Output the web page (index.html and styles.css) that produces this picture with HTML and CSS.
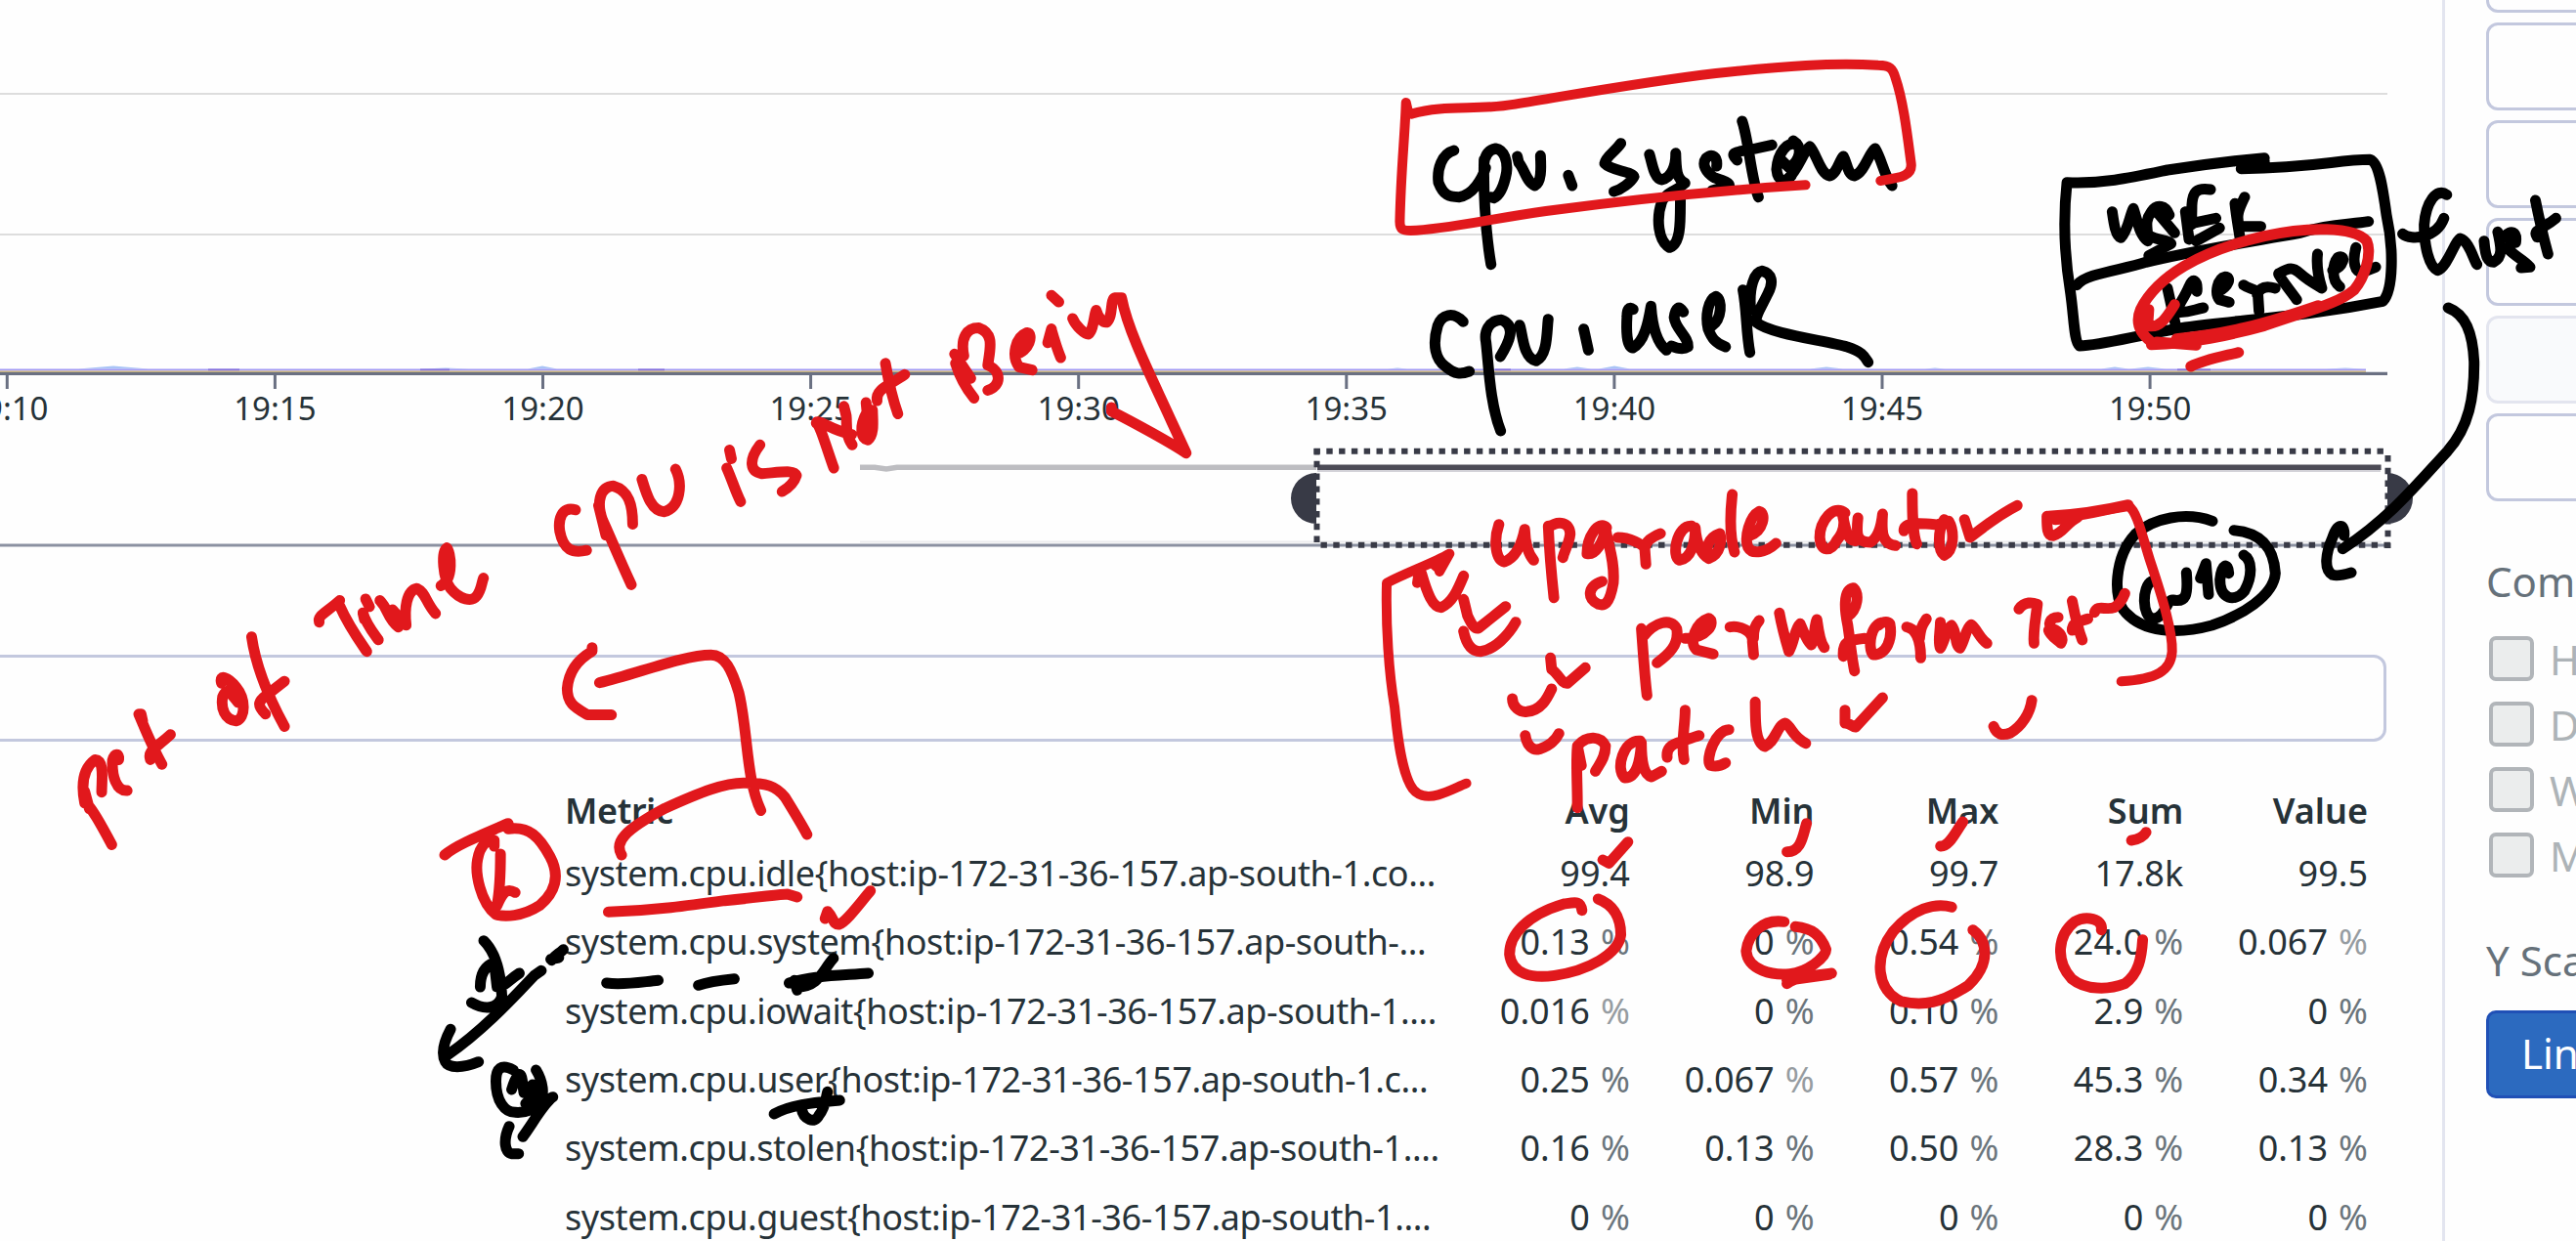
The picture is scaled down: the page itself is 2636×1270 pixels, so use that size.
FILE: index.html
```html
<!DOCTYPE html>
<html lang="en">
<head>
<meta charset="utf-8">
<title>Metrics explorer</title>
<link rel="stylesheet" href="styles.css">
</head>
<body>
<div class="page">
  <main class="main">
    <svg class="chart" width="2499" height="600" viewBox="0 0 2499 600">
      <g class="gridline"><path d="M0 96H2443M0 240H2443"/></g>
      <path class="series-light" d="M80 377.5l36 -3l36 3M432 377.5l24 -1l24 1M540 377.5l15 -3l15 3M1420 377.5l10 -1l10 1M1600 377.5l14 -2l14 2M1636 377.5l16 -3l16 3M1852 377.5l17 -2l17 2M1970 377.5l10 -1l10 1M2150 377.5l14 -2l14 2M2180 377.5l18 -2l18 2M2380 377.5l20 -1l18 1"/>
      <path class="series" d="M0 378.5H2421"/>
      <path class="series-deep" d="M213 378.5h32M430 378.5h30M653 378.5h27M1530 378.5h16M2228 378.5h34"/>
      <path class="series-yellow" d="M0 380.2H2421"/>
      <path class="axis" d="M0 382.3H2443"/>
      <path class="tick" d="M7.3 384v14M281.4 384v14M555.5 384v14M829.6 384v14M1103.7 384v14M1377.8 384v14M1651.9 384v14M1926 384v14M2200.1 384v14"/>
      <g class="tick-label">
        <text x="7.3" y="430">19:10</text><text x="281.4" y="430">19:15</text><text x="555.5" y="430">19:20</text><text x="829.6" y="430">19:25</text><text x="1103.7" y="430">19:30</text><text x="1377.8" y="430">19:35</text><text x="1651.9" y="430">19:40</text><text x="1926" y="430">19:45</text><text x="2200.1" y="430">19:50</text>
      </g>
      <path class="overview-axis" d="M0 558H2443"/>
      <path class="overview-faint" d="M880 554.5H2437"/>
      <path class="overview-out" d="M880 478.3H895L907 480L918 478.3H1347"/>
      <path class="overview-shadow" d="M1348 482H2436"/>
      <path class="overview-in" d="M1348 478.3H2436.6"/>
      <path class="handle" d="M1347 484a26 26 0 0 0 0 52zM2443 484a26 26 0 0 1 0 52z"/>
      <path class="brush" d="M1344.5 461.7H2443"/>
      <path class="brush" d="M1351.5 557.7H2446M1347.5 459V556M2443.5 466V561"/>
    </svg>
    <div class="search"></div>
    <div class="table">
      <div class="row head"><span class="metric">Metric</span><span>Avg</span><span>Min</span><span>Max</span><span>Sum</span><span>Value</span></div>
      <div class="row"><span class="metric">system.cpu.idle{host:ip-172-31-36-157.ap-south-1.co...</span><span>99.4</span><span>98.9</span><span>99.7</span><span>17.8k</span><span>99.5</span></div>
      <div class="row"><span class="metric">system.cpu.system{host:ip-172-31-36-157.ap-south-...</span><span>0.13<i>%</i></span><span>0<i>%</i></span><span>0.54<i>%</i></span><span>24.0<i>%</i></span><span>0.067<i class="dim">%</i></span></div>
      <div class="row"><span class="metric">system.cpu.iowait{host:ip-172-31-36-157.ap-south-1....</span><span>0.016<i class="dim">%</i></span><span>0<i>%</i></span><span>0.10<i>%</i></span><span>2.9<i>%</i></span><span>0<i>%</i></span></div>
      <div class="row"><span class="metric">system.cpu.user{host:ip-172-31-36-157.ap-south-1.c...</span><span>0.25<i>%</i></span><span>0.067<i class="dim">%</i></span><span>0.57<i>%</i></span><span>45.3<i>%</i></span><span>0.34<i>%</i></span></div>
      <div class="row"><span class="metric">system.cpu.stolen{host:ip-172-31-36-157.ap-south-1....</span><span>0.16<i>%</i></span><span>0.13<i>%</i></span><span>0.50<i>%</i></span><span>28.3<i>%</i></span><span>0.13<i>%</i></span></div>
      <div class="row"><span class="metric">system.cpu.guest{host:ip-172-31-36-157.ap-south-1....</span><span>0<i>%</i></span><span>0<i>%</i></span><span>0<i>%</i></span><span>0<i>%</i></span><span>0<i>%</i></span></div>
    </div>
  </main>
  <aside class="side">
    <div class="fields">
      <div class="field"></div><div class="field"></div><div class="field"></div><div class="field"></div><div class="field disabled"></div><div class="field"></div>
    </div>
    <div class="title">Com</div>
    <div class="checks">
      <div class="check"><b></b>H</div><div class="check"><b></b>D</div><div class="check"><b></b>W</div><div class="check"><b></b>M</div>
    </div>
    <div class="title scale">Y Sca</div>
    <div class="button">Lin</div>
  </aside>
</div>
<svg class="ink" width="2636" height="1270" viewBox="0 0 2636 1270">
  <g class="black">
    <g transform="translate(1400 40) scale(.3954 .33333)">
      <path d="M222 342C190 352 178 400 182 440C195 480 210 485 235 485C270 480 295 430 304 395M300 400C298 360 310 340 330 336C352 340 362 375 358 410C352 450 340 480 325 488L318 485M300 370C298 450 302 580 318 692"/>
      <path d="M386 360L390 380C405 400 410 440 432 450C448 440 448 400 446 358M518 418L528 450M654 320C640 345 615 360 612 382C630 405 680 405 688 422C680 440 655 462 636 468"/>
      <path d="M728 354C735 380 740 430 760 432C785 425 797 390 796 350C797 400 798 430 820 442C800 465 770 470 760 500C745 550 750 620 780 640C810 630 808 560 808 490"/>
      <path d="M902 390C905 360 890 350 875 365C862 385 875 410 895 425C920 435 935 440 935 450L890 465M968 252C985 310 990 420 1010 485M955 372C935 350 950 345 980 342L1045 325"/>
      <path d="M1110 325C1085 310 1060 350 1057 400C1060 440 1080 440 1095 420M1100 312C1125 330 1120 370 1090 395L1068 370"/>
      <path d="M1085 430C1115 400 1125 345 1143 330C1160 350 1170 415 1195 420C1215 410 1220 370 1230 360C1240 380 1240 415 1258 420C1285 410 1295 350 1312 336C1330 370 1335 420 1356 450"/>
      <path d="M246 868C220 835 190 845 180 880C165 940 175 985 200 1005C225 1030 240 1030 262 1020M342 975C365 930 385 880 345 862C310 865 300 900 305 930C312 1000 315 1120 343 1203M392 878C400 900 400 980 435 988C465 970 462 900 466 860M558 890L570 955"/>
      <path d="M686 830C675 820 670 830 670 850C668 890 668 945 685 948C715 930 725 870 732 820C735 870 745 930 772 955M816 838C805 815 795 825 792 855C795 890 830 915 828 945C815 955 800 950 785 942M890 880C915 860 918 800 900 790C880 800 872 850 880 890C890 920 900 935 925 945"/>
      <path d="M970 770C980 830 978 900 988 962M990 830C985 760 1000 715 1020 712C1045 720 1050 745 1035 780C1015 830 1000 850 1005 870C1040 905 1180 925 1240 945C1280 960 1285 975 1294 992"/>
    </g>
    <g transform="translate(2060 120) scale(.36735 .33333)">
      <path d="M700 125C600 135 500 150 430 162C330 185 250 205 150 200C140 300 142 420 160 540C170 620 170 690 185 702C250 700 340 670 480 645C640 620 800 615 1030 565C1060 530 1060 400 1040 300C1030 220 1020 140 995 130C900 130 850 155 635 158M700 135L645 150"/>
      <path d="M178 515C200 480 300 470 370 445C500 410 620 390 800 355C880 325 940 330 990 320"/>
      <path d="M276 290C280 320 285 365 300 370C320 350 325 300 335 280C345 310 350 360 375 380M435 300C425 270 400 265 385 290C365 320 375 340 375 370M400 290L450 355M375 360C400 380 430 375 440 388L378 425M480 290L490 375M550 222C510 215 500 230 498 270C498 310 495 340 500 325L565 310M575 340L510 380M618 265C622 310 628 340 632 372M645 245C630 280 620 300 630 335L690 335"/>
      <path d="M430 525L452 635M512 535C515 500 500 490 490 520C475 560 450 590 460 598C490 600 505 590 530 585M572 535C600 520 610 490 590 490C570 495 560 540 575 560L602 568M642 515C660 530 680 525 682 545L685 595M680 545C690 515 715 520 730 525M790 560C770 530 735 480 740 480C770 460 780 460 800 480C820 500 845 515 860 525C850 490 845 450 848 420M890 470C920 460 930 420 905 430C890 450 885 500 910 520M955 400C945 440 950 480 975 475L1010 460"/>
      <path d="M1085 358C1110 380 1180 370 1200 310M1208 238C1180 215 1150 260 1145 330C1145 400 1160 460 1182 470C1210 460 1230 380 1245 372C1270 380 1280 430 1292 452M1312 380C1315 420 1320 445 1338 445C1365 430 1360 400 1350 352M1400 385C1405 350 1385 345 1370 365C1375 390 1380 400 1375 400C1400 430 1420 435 1440 460L1415 462M1455 255C1465 310 1480 380 1490 420M1460 368C1445 345 1475 345 1512 310"/>
      <path d="M1212 585C1260 605 1280 660 1284 750C1285 860 1270 950 1210 1025C1130 1120 1050 1230 918 1325M922 1285C925 1250 905 1240 890 1290C870 1340 865 1390 890 1405C905 1410 930 1402 942 1398"/>
    </g>
    <g transform="translate(2120 480) scale(.33333)">
      <path d="M432 160C350 130 250 150 195 200C130 270 125 400 165 440C220 500 320 510 430 480C520 450 620 390 625 320C620 240 580 195 498 188"/>
      <path d="M245 345C215 360 215 455 250 460C290 455 290 400 310 402C350 410 358 390 352 318M395 335L412 290L420 385M482 320C480 285 460 290 455 340C455 400 500 410 530 375C555 330 555 280 528 264"/>
    </g>
    <g transform="translate(420 780) scale(.35714 .33333)">
      <path d="M210 548C250 590 260 670 262 720C250 760 210 760 175 738M200 690C200 650 215 625 240 615L248 690C270 690 280 670 312 648M375 640L355 655C280 740 200 830 105 900M115 820C90 870 90 900 100 920C110 940 150 940 195 920M405 608C415 590 425 590 438 575M402 605L425 600"/>
      <path d="M562 678C610 685 660 675 710 670M825 685C850 675 880 670 928 665M1085 678C1150 655 1230 655 1312 648M1108 700L1100 670M1090 678L1150 670M1110 690C1170 690 1180 640 1212 602"/>
      <path d="M295 945C260 925 245 940 245 980C245 1040 270 1075 300 1075C350 1080 380 1040 408 1028M360 945C380 980 385 1020 370 1050M290 1005C300 970 315 940 320 975L325 1015L350 990L370 1010L330 1048L370 1035M408 1028C380 1050 350 1110 322 1150M283 1118C265 1160 270 1200 290 1202H310"/>
      <path d="M1042 1080C1090 1050 1160 1045 1230 1038M1120 1060C1125 1100 1160 1110 1170 1085C1190 1060 1190 1030 1195 1012"/>
    </g>
  </g>
  <g class="red">
    <g transform="translate(1400 40) scale(.3954 .33333)">
      <path class="fine" d="M98 195L102 215M112 230C200 200 280 220 380 200C560 165 720 130 900 105C1080 82 1200 72 1320 80C1350 80 1358 90 1365 120C1385 190 1395 290 1405 380C1410 420 1380 425 1326 435M98 195C95 300 85 400 82 560C82 585 90 588 110 588C200 585 300 555 460 528C700 490 900 465 1132 448"/>
    </g>
    <g transform="translate(2060 120) scale(.36735 .33333)">
      <path d="M385 690C350 660 340 630 355 590C400 490 520 410 700 365C820 335 950 335 985 380C1000 420 980 490 950 530C900 575 830 590 700 640C600 670 500 695 385 698M378 590L375 640C410 650 430 610 450 575M400 690L510 700M455 680C600 665 700 635 850 578M495 765C530 745 580 735 628 722"/>
    </g>
    <g transform="translate(2120 480) scale(.33333)">
      <path class="fine" d="M0 145C60 140 120 120 175 114C200 130 215 200 240 280C280 400 310 500 308 560C305 620 260 645 152 652"/>
    </g>
    <g transform="translate(1380 440) scale(.57398 .33333)">
      <path d="M268 290C258 340 262 400 278 405C300 390 310 340 314 305C315 350 320 380 330 400M356 295C358 380 362 450 366 515M356 300C375 275 395 285 395 320C393 350 385 370 382 392M460 300C445 275 425 330 425 380C440 385 455 345 458 300C462 350 475 400 472 470C465 540 455 540 445 535C425 520 425 480 452 465M480 330C500 330 525 350 528 365L530 412M528 365C530 340 540 330 556 318"/>
      <path d="M612 295C585 290 575 390 590 400C610 395 618 350 618 300C620 350 630 385 642 395C665 380 665 335 662 318C640 330 635 370 642 390M684 198C680 260 680 330 688 375M715 325C740 310 745 255 732 250C715 265 705 330 712 360C720 385 745 375 762 348"/>
      <path d="M885 255C865 225 840 280 840 330C842 375 860 375 870 340C885 310 885 280 880 255C885 300 890 345 905 340M908 270C905 320 905 345 930 345C945 330 950 290 952 258C950 310 950 350 975 355M1005 195C1005 250 1005 320 1013 350M990 310C990 285 1010 285 1045 290M1062 275C1050 310 1050 370 1062 385C1080 370 1080 310 1070 280L1050 290M1098 275L1108 330C1130 300 1160 260 1192 232"/>
      <path d="M1245 265C1245 300 1245 325 1256 325C1275 315 1280 285 1300 268L1260 275M1248 265C1300 260 1340 250 1390 230"/>
      <path class="fine" d="M180 380C150 410 100 440 68 470C66 600 72 750 82 850C88 960 95 1040 110 1090C120 1125 140 1130 160 1120C180 1110 195 1095 210 1085M180 380L162 435M125 435L122 470M150 410L160 425"/>
      <path d="M130 440C140 500 150 545 165 545C185 530 195 490 205 448M205 520L212 570C220 600 225 612 232 608L280 542M205 618C210 660 220 680 235 680C260 675 285 630 298 590M360 700L362 735C375 750 380 780 390 778L422 730M292 825C292 850 305 868 318 865C345 860 355 820 362 795M315 938C318 970 328 985 340 980C358 970 370 950 375 932"/>
      <path d="M522 610C525 680 528 760 532 815M525 635C545 590 575 575 585 610C590 660 570 690 550 715M600 640C640 640 655 590 642 578C620 590 605 650 620 675L650 688M680 605C700 600 722 620 720 650L722 690M722 640C722 610 725 600 732 585M768 562C772 600 778 640 785 680C795 650 795 610 805 595C812 620 815 645 825 660C832 630 830 600 835 582C838 620 840 650 848 668"/>
      <path d="M888 575C910 550 910 500 900 485C880 490 885 560 890 600C895 660 898 710 902 740M882 695C880 650 890 645 920 640M955 590C930 590 925 670 935 690C960 690 970 640 965 595C960 585 950 590 945 600M995 605C1010 610 1020 640 1020 700M1018 640C1020 610 1022 600 1030 580M1055 590C1055 620 1050 650 1055 670C1065 640 1065 610 1075 600C1085 620 1080 660 1090 670C1100 640 1100 610 1110 598C1120 610 1125 640 1138 655"/>
      <path d="M1195 550C1205 525 1220 530 1228 535C1225 580 1220 620 1222 655M1265 575C1250 575 1245 600 1255 610C1270 620 1275 640 1270 655C1260 640 1250 630 1248 615M1290 525C1295 570 1300 610 1308 645M1290 615C1290 590 1300 590 1318 580M1330 560C1335 535 1350 555 1365 545C1375 535 1380 520 1384 502"/>
      <path d="M408 1160C408 1080 405 1020 408 970C425 935 450 940 458 970C458 1010 445 1030 440 1048M408 970L415 1030M520 955C490 950 475 1040 492 1068C515 1070 520 1010 522 960C522 1010 525 1060 540 1065L558 1048M600 860C600 910 592 960 598 1012M568 1005C565 960 590 960 625 938M678 920C655 920 635 1010 645 1030C655 1035 665 1030 672 1022M725 835C725 900 725 960 742 972C760 960 765 905 778 900C790 910 790 940 815 962M885 860L885 900C895 900 900 915 904 912L952 822M1150 910C1155 935 1165 940 1180 930C1200 910 1215 870 1218 830"/>
    </g>
    <g transform="translate(40 280) scale(.3954)">
      <path d="M188 1478C165 1435 130 1370 118 1370C108 1320 115 1280 145 1258C170 1260 162 1310 162 1342M130 1385L118 1340M206 1258C208 1240 195 1240 190 1260C188 1300 200 1340 228 1338M258 1140C275 1180 295 1230 318 1270M264 1140L268 1158M288 1258C280 1235 300 1230 340 1193"/>
      <path d="M472 1060C465 1035 490 1045 510 1070C535 1100 535 1150 510 1158C480 1155 470 1125 475 1095C485 1070 500 1090 515 1110L495 1075M550 940C560 1010 585 1080 635 1172M586 1140C560 1115 570 1105 590 1090L635 1055"/>
      <path d="M725 902C720 885 740 880 778 846M778 860C800 910 825 945 848 978M845 842L855 862M838 878L842 895M838 878C845 905 865 930 878 948M882 846C905 870 900 890 930 915L915 870L950 910C945 870 950 820 978 815C1000 825 1000 850 1026 880M1040 808C1075 790 1065 720 1055 710C1040 720 1045 790 1065 815C1090 845 1120 850 1132 835C1145 820 1145 800 1150 788M1055 715L1058 780"/>
    </g>
    <g transform="translate(520 280) scale(.47194 .38265)">
      <path d="M146 632C115 620 108 660 112 690C120 740 140 748 170 740M267 832C240 760 220 700 205 660C190 610 200 570 228 568C262 580 270 620 270 670M196 620L212 700M290 550C300 590 310 635 338 637C375 625 378 560 363 523M480 472L484 495M474 520C485 550 492 580 504 610M546 458C520 500 525 530 550 535C600 530 620 525 625 540C620 560 605 575 594 583"/>
      <path d="M706 520C690 465 675 400 668 400C670 385 700 420 745 430M728 355L733 380C735 400 730 430 746 458M776 345L778 370C760 410 765 440 780 445C795 430 790 390 790 365L782 410M818 240C825 290 835 340 845 375M800 340C795 310 825 300 860 270"/>
      <path d="M968 215L1003 280M970 240C980 280 995 310 1010 333M988 220C980 170 995 145 1020 145C1055 160 1045 200 1040 245C1070 260 1070 300 1040 312M1100 215C1130 210 1140 160 1125 158C1100 170 1090 220 1108 250L1136 258M1178 58L1194 76M1178 148L1170 185M1178 150C1185 180 1190 200 1198 225M1224 120C1230 140 1250 162 1258 162C1270 150 1270 110 1275 98C1280 120 1290 132 1298 130C1312 115 1305 70 1315 65L1330 65C1345 160 1400 290 1440 400L1470 480C1440 455 1360 400 1308 368V358"/>
      <path d="M182 1000V1010C140 1040 130 1080 128 1110C128 1150 145 1160 172 1180L224 1180M198 1094C280 1070 380 1020 440 1020C470 1020 485 1060 500 1120C520 1220 515 1350 548 1436M246 1555C230 1520 250 1490 340 1430C420 1385 470 1362 510 1362C560 1362 580 1370 600 1400C620 1440 635 1470 648 1500"/>
    </g>
    <g transform="translate(420 780) scale(.35714 .33333)">
      <path d="M98 285C130 255 200 225 280 188M280 205C340 195 370 230 400 290C430 350 415 400 370 440C320 475 270 475 245 468C200 430 185 340 192 300C200 250 225 235 240 240V258M258 282C258 340 255 400 248 440C265 400 275 385 300 400M567 460C700 455 800 440 900 425C1000 415 1060 405 1080 405L1108 414M1188 480L1195 458C1215 480 1210 500 1228 498C1250 490 1290 430 1318 395"/>
    </g>
    <g transform="translate(980 780) scale(.48469 .33333)">
      <path d="M1362 300L1375 310L1415 245M1318 455C1315 425 1305 430 1280 435C1200 470 1165 530 1165 590C1170 650 1210 665 1260 655C1330 640 1395 590 1400 530C1400 470 1380 435 1352 420"/>
    </g>
    <g transform="translate(1740 780) scale(.57143 .33333)">
      <path d="M190 188C183 230 180 275 155 275M470 183C455 220 445 260 430 258M772 240C785 238 795 225 798 215M150 490C110 480 85 530 82 580C85 640 130 655 160 650C190 645 225 600 225 575C215 530 200 510 170 505M155 680C170 660 200 655 235 648M155 670L230 652M450 445C420 430 380 450 345 520C310 600 315 700 360 735C400 750 430 740 480 685C520 620 515 550 488 515M718 515C722 480 690 470 670 490C640 530 635 610 665 665C690 700 730 700 760 680C785 650 790 600 792 545"/>
    </g>
  </g>
</svg>
</body>
</html>
```
FILE: styles.css
```css
* { box-sizing: border-box; }
body { margin: 0; background: #fefefe; font-family: "Noto Sans", sans-serif; color: #263238; }
.page { position: relative; display: flex; width: 2636px; height: 1270px; overflow: hidden; }
.main { flex: none; width: 2502px; border-right: 3px solid #e3e5ef; }
.chart { display: block; }
.chart path { fill: none; }
.gridline { stroke: #dddddd; stroke-width: 2; }
.chart .series-light { fill: #a9c4f6; }
.series { stroke: #a199f4; stroke-width: 2; }
.series-deep { stroke: #8470dc; stroke-width: 2; }
.series-yellow { stroke: #dcc27c; stroke-width: 1.4; }
.axis { stroke: #6a7082; stroke-width: 3.2; }
.tick { stroke: #6a7082; stroke-width: 3; }
.tick-label { font-size: 33px; fill: #263238; text-anchor: middle; }
.overview-axis { stroke: #8b91a1; stroke-width: 3; }
.overview-faint { stroke: #ececee; stroke-width: 2; }
.overview-out { stroke: #bdbdc1; stroke-width: 5.5; }
.overview-in { stroke: #4c4b56; stroke-width: 5.5; }
.overview-shadow { stroke: #d3d2d8; stroke-width: 2; }
.chart .handle { fill: #383a46; }
.brush { stroke: #383a46; stroke-width: 6; stroke-dasharray: 6.4 6.4; }
.search { width: 2462px; height: 89px; margin: 70px 0 0 -20px; border: 3px solid #c3c8de; border-radius: 13px; }
.table { width: 1845px; margin: 39px 0 0 578px; font-size: 36px; }
.row { display: grid; grid-template-columns: 901px repeat(5, 188.8px); height: 70.33px; line-height: 70.33px; white-space: pre; text-align: right; }
.row .metric { text-align: left; letter-spacing: -0.41px; }
.head { height: 61px; line-height: 63px; font-weight: 600; }
.row i { margin-left: 11px; font-style: normal; color: #6b757c; }
.row i.dim { color: #969ca1; }
.side { flex: none; width: 134px; padding-left: 42px; font-size: 42px; line-height: 57px; white-space: nowrap; }
.fields { display: flex; flex-direction: column; gap: 10px; margin-top: -77px; }
.field { width: 300px; height: 90px; border: 3px solid #c3c8de; border-radius: 12px; }
.field.disabled { background: #f9fafc; border-color: #e3e5ef; }
.title { margin-top: 53px; color: #66717a; }
.checks { display: flex; flex-direction: column; gap: 21px; margin: 28px 0 0 3px; color: #adb3b7; }
.check { display: flex; align-items: center; gap: 16px; height: 46px; line-height: 55px; }
.check b { flex: none; width: 46px; height: 46px; border: 4px solid #b1b5b9; border-radius: 7px; background: #ebeded; }
.title.scale { margin-top: 56px; }
.button { width: 300px; height: 90px; margin-top: 23px; padding-left: 33px; border: 3px solid #2050b6; border-radius: 10px; background: #2c6abf; color: #fff; line-height: 82px; }
.ink { position: absolute; left: 0; top: 0; pointer-events: none; }
.ink path { fill: none; stroke-linecap: round; stroke-linejoin: round; vector-effect: non-scaling-stroke; }
.black path { stroke: #000; stroke-width: 11; }
.red path { stroke: #e1181c; stroke-width: 11; }
.red path.fine { stroke-width: 10; }
```
